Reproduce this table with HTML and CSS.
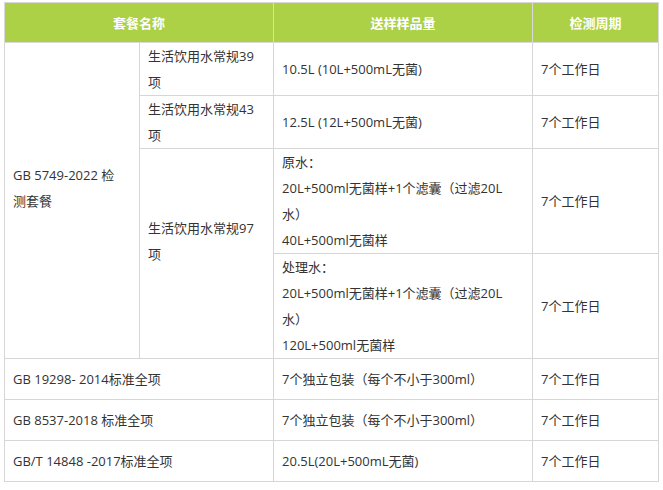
FILE: index.html
```html
<!DOCTYPE html>
<html lang="zh">
<head>
<meta charset="utf-8">
<title>检测套餐</title>
<link rel="stylesheet" href="styles.css">
</head>
<body>
<table class="pkg">
  <colgroup>
    <col class="c1">
    <col class="c2">
    <col class="c3">
    <col class="c4">
  </colgroup>
  <thead>
    <tr class="head">
      <th colspan="2">套餐名称</th>
      <th>送样样品量</th>
      <th>检测周期</th>
    </tr>
  </thead>
  <tbody>
    <tr class="r2">
      <td rowspan="4" class="span-cell name-cell">GB 5749-2022 检测套餐</td>
      <td>生活饮用水常规39项</td>
      <td>10.5L (10L+500mL无菌)</td>
      <td>7个工作日</td>
    </tr>
    <tr class="r2">
      <td>生活饮用水常规43项</td>
      <td>12.5L (12L+500mL无菌)</td>
      <td>7个工作日</td>
    </tr>
    <tr class="r4">
      <td rowspan="2" class="span-cell">生活饮用水常规97项</td>
      <td>原水：<br>20L+500ml无菌样+1个滤囊（过滤20L水）<br>40L+500ml无菌样</td>
      <td>7个工作日</td>
    </tr>
    <tr class="r4">
      <td>处理水：<br>20L+500ml无菌样+1个滤囊（过滤20L水）<br>120L+500ml无菌样</td>
      <td>7个工作日</td>
    </tr>
    <tr class="r1">
      <td colspan="2">GB 19298- 2014标准全项</td>
      <td>7个独立包装（每个不小于300ml）</td>
      <td>7个工作日</td>
    </tr>
    <tr class="r1">
      <td colspan="2">GB 8537-2018 标准全项</td>
      <td>7个独立包装（每个不小于300ml）</td>
      <td>7个工作日</td>
    </tr>
    <tr class="r1">
      <td colspan="2">GB/T 14848 -2017标准全项</td>
      <td>20.5L(20L+500mL无菌)</td>
      <td>7个工作日</td>
    </tr>
  </tbody>
</table>
</body>
</html>
```
FILE: styles.css
```css
html, body {
  margin: 0;
  padding: 0;
  background: #ffffff;
}
body {
  padding: 2px 5px 0 4px;
  font-family: "Open Sans", "Noto Sans CJK SC", sans-serif;
  font-size: 13px;
  color: #333333;
}
.pkg {
  border-collapse: collapse;
  table-layout: fixed;
  width: 654px;
}
.c1 { width: 135px; }
.c2 { width: 134px; }
.c3 { width: 259px; }
.c4 { width: 126px; }
.pkg th,
.pkg td {
  border: 1px solid #d6d6d6;
  padding: 0 11px 0 8px;
  line-height: 26px;
  text-align: left;
  vertical-align: middle;
  font-weight: normal;
  word-break: break-all;
}
.pkg th {
  background: #acd046;
  color: #ffffff;
  font-weight: bold;
  text-align: center;
  padding: 0 8px;
  height: 39px;
  border-color: #d9d9d9;
}
.pkg .r1 td {
  height: 40px;
}
.pkg td.span-cell {
  padding-bottom: 25px;
}
.pkg td.name-cell {
  padding-right: 18px;
}
```
